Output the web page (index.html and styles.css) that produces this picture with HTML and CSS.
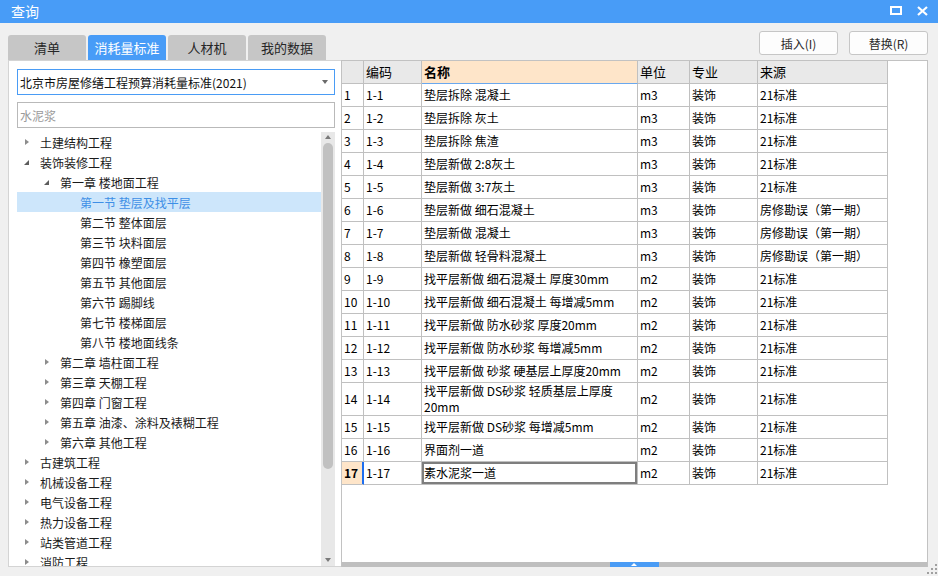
FILE: index.html
```html
<!DOCTYPE html>
<html lang="zh-CN">
<head>
<meta charset="utf-8">
<title>查询</title>
<link rel="stylesheet" href="styles.css">
</head>
<body>
<div class="window">
  <header class="titlebar">
    <span class="title">查询</span>
    <div class="win-btns">
      <svg class="ico-max" width="12" height="9" viewBox="0 0 12 9"><rect x="1" y="1" width="10" height="7" fill="none" stroke="#fff" stroke-width="2"/></svg>
      <svg class="ico-close" width="11" height="10" viewBox="0 0 11 10"><path d="M1 1 L10 9 M10 1 L1 9" stroke="#fff" stroke-width="2.2" fill="none"/></svg>
    </div>
  </header>
  <div class="content">
    <section class="left">
      <nav class="tabs">
        <div class="tab">清单</div>
        <div class="tab active">消耗量标准</div>
        <div class="tab">人材机</div>
        <div class="tab">我的数据</div>
      </nav>
      <div class="panel">
        <div class="select"><span>北京市房屋修缮工程预算消耗量标准(2021)</span><i class="caret"></i></div>
        <div class="search">水泥浆</div>
        <div class="tree">
          <ul class="tree-list">
            <li class="node lv0"><i class="tw closed"></i>土建结构工程</li>
            <li class="node lv0"><i class="tw open"></i>装饰装修工程</li>
            <li class="node lv1"><i class="tw open"></i>第一章 楼地面工程</li>
            <li class="node lv2 selected"><i class="tw"></i>第一节 垫层及找平层</li>
            <li class="node lv2"><i class="tw"></i>第二节 整体面层</li>
            <li class="node lv2"><i class="tw"></i>第三节 块料面层</li>
            <li class="node lv2"><i class="tw"></i>第四节 橡塑面层</li>
            <li class="node lv2"><i class="tw"></i>第五节 其他面层</li>
            <li class="node lv2"><i class="tw"></i>第六节 踢脚线</li>
            <li class="node lv2"><i class="tw"></i>第七节 楼梯面层</li>
            <li class="node lv2"><i class="tw"></i>第八节 楼地面线条</li>
            <li class="node lv1"><i class="tw closed"></i>第二章 墙柱面工程</li>
            <li class="node lv1"><i class="tw closed"></i>第三章 天棚工程</li>
            <li class="node lv1"><i class="tw closed"></i>第四章 门窗工程</li>
            <li class="node lv1"><i class="tw closed"></i>第五章 油漆、涂料及裱糊工程</li>
            <li class="node lv1"><i class="tw closed"></i>第六章 其他工程</li>
            <li class="node lv0"><i class="tw closed"></i>古建筑工程</li>
            <li class="node lv0"><i class="tw closed"></i>机械设备工程</li>
            <li class="node lv0"><i class="tw closed"></i>电气设备工程</li>
            <li class="node lv0"><i class="tw closed"></i>热力设备工程</li>
            <li class="node lv0"><i class="tw closed"></i>站类管道工程</li>
            <li class="node lv0"><i class="tw closed"></i>消防工程</li>
          </ul>
          <div class="vscroll">
            <i class="arr up"></i>
            <div class="vthumb"></div>
            <i class="arr down"></i>
          </div>
        </div>
      </div>
    </section>
    <section class="right">
      <div class="actions">
        <button class="btn">插入(I)</button>
        <button class="btn">替换(R)</button>
      </div>
      <div class="grid">
        <div class="grid-body">
          <table class="data">
            <thead>
              <tr>
                <th class="c-no"></th>
                <th class="c-code">编码</th>
                <th class="c-name">名称</th>
                <th class="c-unit">单位</th>
                <th class="c-major">专业</th>
                <th class="c-src">来源</th>
              </tr>
            </thead>
            <tbody>
              <tr><td class="c-no">1</td><td>1-1</td><td>垫层拆除 混凝土</td><td>m3</td><td>装饰</td><td>21标准</td></tr>
              <tr><td class="c-no">2</td><td>1-2</td><td>垫层拆除 灰土</td><td>m3</td><td>装饰</td><td>21标准</td></tr>
              <tr><td class="c-no">3</td><td>1-3</td><td>垫层拆除 焦渣</td><td>m3</td><td>装饰</td><td>21标准</td></tr>
              <tr><td class="c-no">4</td><td>1-4</td><td>垫层新做 2:8灰土</td><td>m3</td><td>装饰</td><td>21标准</td></tr>
              <tr><td class="c-no">5</td><td>1-5</td><td>垫层新做 3:7灰土</td><td>m3</td><td>装饰</td><td>21标准</td></tr>
              <tr><td class="c-no">6</td><td>1-6</td><td>垫层新做 细石混凝土</td><td>m3</td><td>装饰</td><td>房修勘误（第一期）</td></tr>
              <tr><td class="c-no">7</td><td>1-7</td><td>垫层新做 混凝土</td><td>m3</td><td>装饰</td><td>房修勘误（第一期）</td></tr>
              <tr><td class="c-no">8</td><td>1-8</td><td>垫层新做 轻骨料混凝土</td><td>m3</td><td>装饰</td><td>房修勘误（第一期）</td></tr>
              <tr><td class="c-no">9</td><td>1-9</td><td>找平层新做 细石混凝土 厚度30mm</td><td>m2</td><td>装饰</td><td>21标准</td></tr>
              <tr><td class="c-no">10</td><td>1-10</td><td>找平层新做 细石混凝土 每增减5mm</td><td>m2</td><td>装饰</td><td>21标准</td></tr>
              <tr><td class="c-no">11</td><td>1-11</td><td>找平层新做 防水砂浆 厚度20mm</td><td>m2</td><td>装饰</td><td>21标准</td></tr>
              <tr><td class="c-no">12</td><td>1-12</td><td>找平层新做 防水砂浆 每增减5mm</td><td>m2</td><td>装饰</td><td>21标准</td></tr>
              <tr><td class="c-no">13</td><td>1-13</td><td>找平层新做 砂浆 硬基层上厚度20mm</td><td>m2</td><td>装饰</td><td>21标准</td></tr>
              <tr><td class="c-no">14</td><td>1-14</td><td>找平层新做 DS砂浆 轻质基层上厚度 20mm</td><td>m2</td><td>装饰</td><td>21标准</td></tr>
              <tr><td class="c-no">15</td><td>1-15</td><td>找平层新做 DS砂浆 每增减5mm</td><td>m2</td><td>装饰</td><td>21标准</td></tr>
              <tr><td class="c-no">16</td><td>1-16</td><td>界面剂一道</td><td>m2</td><td>装饰</td><td>21标准</td></tr>
              <tr class="current"><td class="c-no">17</td><td>1-17</td><td class="focus">素水泥浆一道</td><td>m2</td><td>装饰</td><td>21标准</td></tr>
            </tbody>
          </table>
        </div>
        <div class="hscroll"><div class="hthumb"><i class="hthumb-arrow"></i></div></div>
      </div>
    </section>
  </div>
  <div class="grip">
    <svg width="10" height="10" viewBox="0 0 10 10" fill="#a0a0a0">
      <rect x="8" y="0" width="2" height="2"/>
      <rect x="4" y="4" width="2" height="2"/><rect x="8" y="4" width="2" height="2"/>
      <rect x="0" y="8" width="2" height="2"/><rect x="4" y="8" width="2" height="2"/><rect x="8" y="8" width="2" height="2"/>
    </svg>
  </div>
</div>
</body>
</html>
```

FILE: styles.css
```css
* { box-sizing: border-box; }
html, body { margin: 0; padding: 0; }
body {
  background: #f0f0f0;
  font-family: "Noto Sans CJK SC", "Noto Sans", sans-serif;
  font-size: 12px;
  color: #1a1a1a;
}
.window {
  position: relative;
  width: 938px;
  height: 576px;
  overflow: hidden;
  background: #f0f0f0;
}
.titlebar {
  height: 23px;
  background: #489cf7;
  display: flex;
  align-items: center;
  justify-content: space-between;
  padding: 0 10px 0 11px;
  color: #fff;
}
.title { font-size: 14px; line-height: 23px; }
.win-btns { display: flex; align-items: center; gap: 15px; margin-top: -2px; }
.ico-max, .ico-close { display: block; }

.content { display: flex; height: 553px; }

/* left */
.left {
  width: 333px;
  margin-left: 8px;
  display: flex;
  flex-direction: column;
  padding-top: 12px;
  padding-bottom: 9px;
}
.tabs { display: flex; gap: 2px; height: 25px; }
.tab {
  width: 78px;
  height: 25px;
  background: #c6c6c6;
  border-radius: 3px 3px 0 0;
  display: flex;
  align-items: center;
  justify-content: center;
  font-size: 13px;
  color: #262626;
}
.tab.active { background: #489cf7; color: #fff; }

.panel {
  flex: 1;
  background: #fff;
  border: 1px solid #d4d4d4;
  border-right: none;
  padding: 8px 6px 0 8px;
  display: flex;
  flex-direction: column;
  min-height: 0;
}
.select {
  height: 26px;
  border: 1px solid #4a9cf5;
  display: flex;
  align-items: center;
  justify-content: space-between;
  padding: 0 6px 0 2px;
  font-size: 12px;
  color: #111;
}
.caret {
  width: 0; height: 0;
  border-left: 3.5px solid transparent;
  border-right: 3.5px solid transparent;
  border-top: 4px solid #6a6a6a;
}
.search {
  height: 26px;
  margin-top: 7px;
  border: 1px solid #b9b9b9;
  display: flex;
  align-items: center;
  padding-left: 2px;
  color: #9a9a9a;
  font-size: 12px;
}
.tree {
  flex: 1;
  margin-top: 4px;
  display: flex;
  min-height: 0;
  overflow: hidden;
}
.tree-list {
  list-style: none;
  margin: 0;
  padding: 0;
  width: 304px;
  overflow: hidden;
}
.node {
  height: 20px;
  display: flex;
  align-items: center;
  white-space: nowrap;
  font-size: 12px;
  color: #1a1a1a;
}
.node.lv0 { padding-left: 6px; }
.node.lv1 { padding-left: 26px; }
.node.lv2 { padding-left: 46px; }
.node.selected { background: #cde6fb; color: #3d8fe6; }
.tw {
  width: 17px;
  height: 20px;
  flex: none;
  position: relative;
}
.tw.closed::before {
  content: "";
  position: absolute;
  left: 2px; top: 6.5px;
  border-left: 4px solid #8c8c8c;
  border-top: 3.5px solid transparent;
  border-bottom: 3.5px solid transparent;
}
.tw.open::before {
  content: "";
  position: absolute;
  left: 1px; top: 8px;
  border-right: 5px solid #5c5c5c;
  border-top: 5px solid transparent;
}
.vscroll {
  width: 14px;
  background: #e8e8e8;
  display: flex;
  flex-direction: column;
  align-items: center;
  position: relative;
}
.arr { width: 0; height: 0; border-left: 3.5px solid transparent; border-right: 3.5px solid transparent; }
.arr.up { border-bottom: 4px solid #7a7a7a; margin-top: 3px; }
.arr.down { border-top: 4px solid #7a7a7a; margin-top: auto; margin-bottom: 4px; }
.vthumb {
  width: 10px;
  height: 326px;
  margin-top: 4px;
  background: #c1c1c1;
  border-radius: 5px;
}

/* right */
.right {
  flex: 1;
  display: flex;
  flex-direction: column;
  padding-top: 8px;
  padding-bottom: 9px;
  padding-right: 10px;
}
.actions {
  display: flex;
  justify-content: flex-end;
  gap: 11px;
  height: 24px;
}
.btn {
  width: 79px;
  height: 24px;
  background: #fdfdfd;
  border: 1px solid #c6c6c6;
  border-radius: 3px;
  font-family: "Noto Sans CJK SC", "Noto Sans", sans-serif;
  font-size: 12px;
  color: #2a2a2a;
  padding: 0;
}
.grid {
  flex: 1;
  margin-top: 5px;
  background: #fff;
  border: 1px solid #c2c2c2;
  border-bottom: none;
  display: flex;
  flex-direction: column;
  min-height: 0;
}
.grid-body { flex: 1; overflow: hidden; }
.data {
  border-collapse: separate;
  border-spacing: 0;
  table-layout: fixed;
  width: 546px;
}
.data th, .data td {
  border-right: 1px solid #c0c0c0;
  border-bottom: 1px solid #c0c0c0;
  padding: 0 1px 0 2px;
  text-align: left;
  vertical-align: middle;
  font-weight: normal;
  line-height: 16px;
  font-size: 12px;
  color: #000;
}
.data thead tr { height: 23px; }
.data th { background: #e9e9e9; font-size: 13px; }
.data th.c-no { width: 22px; }
.data th.c-code { width: 58px; }
.data th.c-name { width: 216px; background: #fee5c9; font-weight: bold; border-bottom-color: #6aa8ee; }
.data th.c-unit { width: 52px; }
.data th.c-major { width: 68px; }
.data th.c-src { width: 130px; }
.data tbody tr { height: 23px; }
.data td.c-no { padding-left: 2px; }
.current td.c-no {
  background: #fee5c9;
  font-weight: bold;
  border-right-color: #1d6ef0;
  box-shadow: inset -1px 0 0 #1d6ef0;
}
.current td.focus { box-shadow: inset 0 0 0 2px #7e7e7e; }

.hscroll {
  height: 5px;
  background: #bfbfbf;
  flex: none;
}
.hthumb {
  width: 49px;
  height: 5px;
  margin-left: 268px;
  background: #4a9cf5;
  position: relative;
}
.hthumb-arrow {
  position: absolute;
  left: 21px; top: 1px;
  border-left: 3px solid transparent;
  border-right: 3px solid transparent;
  border-bottom: 3px solid #fff;
}
.grip { position: absolute; right: 1px; bottom: 2px; }
.grip svg { display: block; }
```
